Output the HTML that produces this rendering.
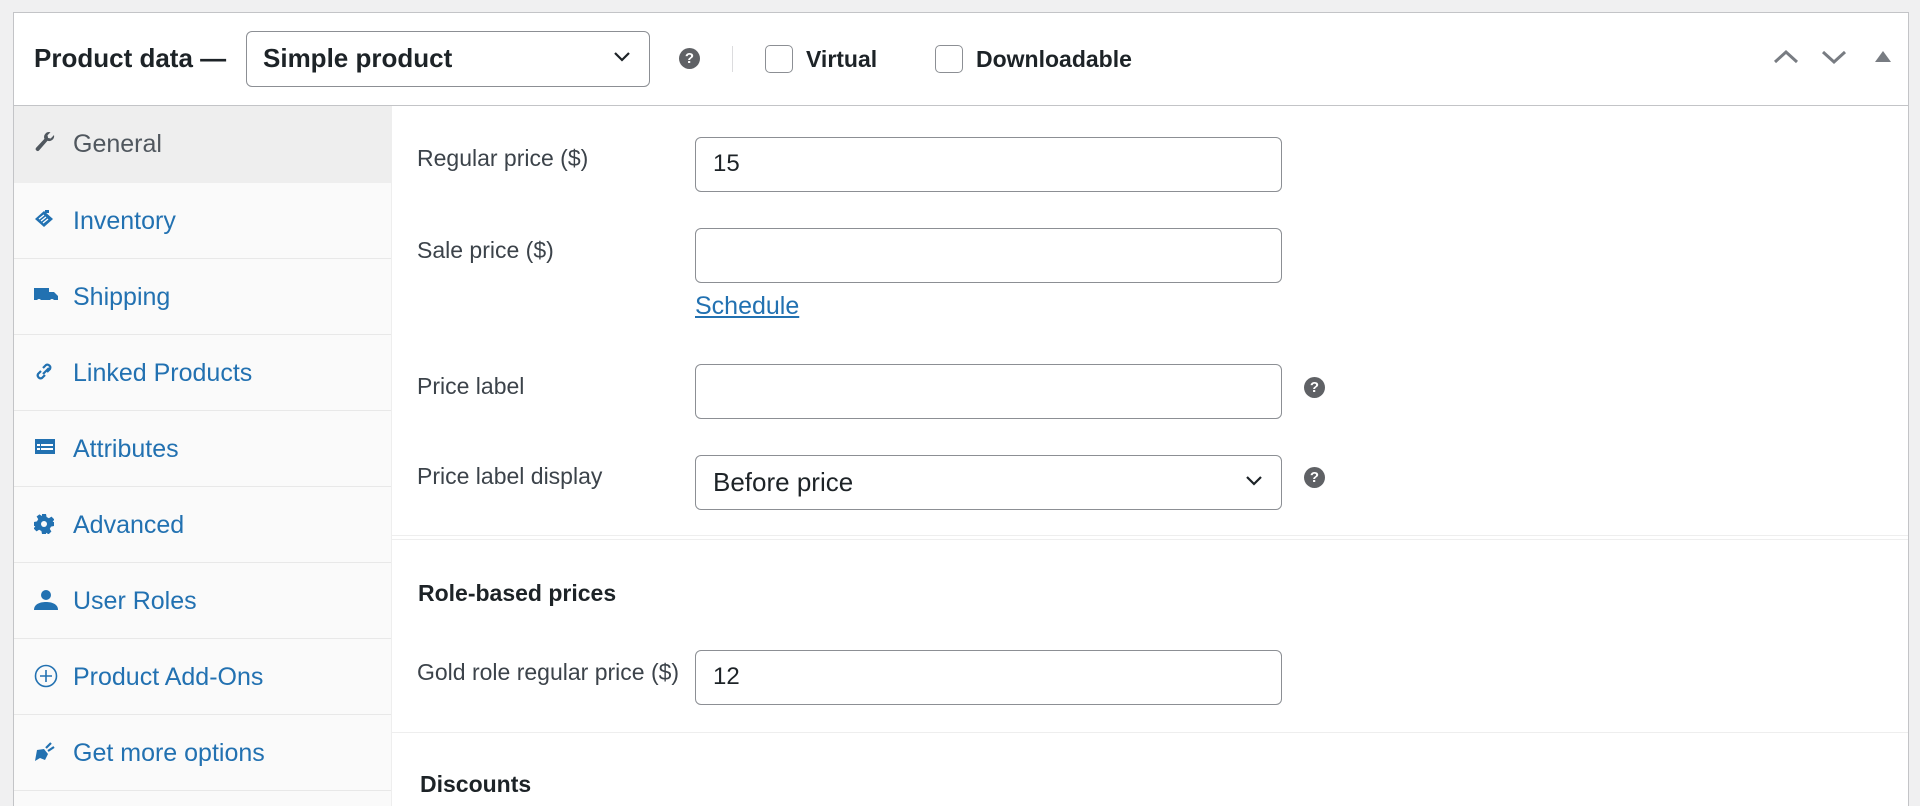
<!DOCTYPE html>
<html><head><meta charset="utf-8"><style>
*{box-sizing:border-box;margin:0;padding:0}
html,body{width:1920px;height:806px;overflow:hidden}
body{background:#f0f0f1;font-family:"Liberation Sans",Arial,sans-serif;position:relative}
.abs{position:absolute}
.panel{left:13px;top:12px;width:1896px;height:800px;background:#fff;border:1px solid #c3c4c7;border-bottom:none}
.hdr{left:14px;top:13px;width:1894px;height:93px;border-bottom:1px solid #c3c4c7;background:#fff}
.side{left:14px;top:106px;width:378px;height:700px;background:#fafafa;border-right:1px solid #eee}
.item{position:absolute;left:0;width:377px;height:76px;border-bottom:1px solid #e8e8e8;color:#2271b1;font-size:25px;line-height:76px;padding-left:59px}
.item svg{position:absolute;left:20px;top:27px}
.lbl{font-size:23px;color:#3c434a;line-height:28px}
.inp{left:695px;width:587px;height:55px;border:1.5px solid #8c8f94;border-radius:6px;background:#fff;font-size:24px;color:#1d2327;line-height:52px;padding-left:17px}
.q{width:21px;height:21px;border-radius:50%;background:#5f6165;color:#fff;font-size:15px;font-weight:bold;text-align:center;line-height:21px}
.cb{width:28px;height:28px;border:1.5px solid #8c8f94;border-radius:5px;background:#fff}
.chev{position:absolute;right:18px;top:19px}
</style></head><body>
<div class="abs panel"></div>
<div class="abs hdr"></div>
<div class="abs" style="left:34px;top:42px;font-size:26px;font-weight:bold;color:#1d2327;line-height:32px">Product data —</div>
<div class="abs inp" style="left:246px;top:31px;width:404px;height:56px;font-weight:600;font-size:26px;padding-left:16px">Simple product
<svg class="chev" width="18" height="12" viewBox="0 0 18 12"><path d="M2 2l7 7 7-7" stroke="#1d2327" stroke-width="2.2" fill="none"/></svg></div>
<div class="abs q" style="left:679px;top:48px">?</div>
<div class="abs" style="left:732px;top:46px;width:1px;height:26px;background:#dcdcde"></div>
<div class="abs cb" style="left:765px;top:45px"></div>
<div class="abs" style="left:806px;top:44px;font-size:23px;font-weight:bold;color:#1d2327;line-height:30px">Virtual</div>
<div class="abs cb" style="left:935px;top:45px"></div>
<div class="abs" style="left:976px;top:44px;font-size:23px;font-weight:bold;color:#1d2327;line-height:30px">Downloadable</div>
<svg class="abs" style="left:1773px;top:49px" width="26" height="16" viewBox="0 0 26 16"><path d="M2 13l11-10 11 10" stroke="#787c82" stroke-width="3" fill="none"/></svg>
<svg class="abs" style="left:1821px;top:49px" width="26" height="16" viewBox="0 0 26 16"><path d="M2 3l11 10 11-10" stroke="#787c82" stroke-width="3" fill="none"/></svg>
<svg class="abs" style="left:1875px;top:51px" width="16" height="11" viewBox="0 0 16 11"><path d="M8 0l8 11H0z" fill="#787c82"/></svg>

<div class="abs side">
<div class="item" style="top:0;height:77px;background:#eee;color:#50575e;border-bottom:none">
<svg width="22" height="22" viewBox="0 0 22 22" style="top:25px"><path d="M20 4a5 5 0 0 1-6.5 5.8L5 19.5a2 2 0 0 1-3-2.6l8.4-9A5 5 0 0 1 16.5 1.3L13.5 4.3l.6 2.7 2.6.5z" fill="#50575e"/></svg>General</div>
<div class="item" style="top:77px"><svg width="22" height="20" viewBox="0 0 22 20"><path d="M1 9l9-8 9 8-9 8z" fill="#2271b1"/><path d="M5 9l5-4M7 11l5-4M9 13l5-4" stroke="#fff" stroke-width="1.3"/><rect x="11" y="0" width="4" height="3" fill="#2271b1"/></svg>Inventory</div>
<div class="item" style="top:153px"><svg width="24" height="18" viewBox="0 0 24 18"><path d="M0 2h15v12H0zM15 6h5l4 4v4h-9z" fill="#2271b1"/><circle cx="5" cy="15" r="2" fill="#fafafa"/><circle cx="18" cy="15" r="2" fill="#fafafa"/></svg>Shipping</div>
<div class="item" style="top:229px"><svg width="22" height="20" viewBox="0 0 22 20"><path d="M9 12l6-6M7 9l-3 3a3 3 0 0 0 4 4l3-3M13 10l3-3a3 3 0 0 0-4-4l-3 3" stroke="#2271b1" stroke-width="2.2" fill="none"/></svg>Linked Products</div>
<div class="item" style="top:305px"><svg width="22" height="18" viewBox="0 0 22 18"><rect x="1" y="1" width="20" height="15" fill="#2271b1"/><rect x="3" y="6" width="3" height="2" fill="#fff"/><rect x="7" y="6" width="12" height="2" fill="#fff"/><rect x="3" y="10" width="3" height="2" fill="#fff"/><rect x="7" y="10" width="12" height="2" fill="#fff"/></svg>Attributes</div>
<div class="item" style="top:381px"><svg width="20" height="20" viewBox="0 0 20 20"><path d="M8 0h4l.6 3 2.3 1.2 2.6-1.6 2.8 2.8-1.6 2.6L20 8v4l-3 .6-1.2 2.3 1.6 2.6-2.8 2.8-2.6-1.6L12 20H8l-.6-3-2.3-1.2-2.6 1.6-2.8-2.8 1.6-2.6L0 12V8l3-.6 1.2-2.3-1.6-2.6L5.4.4 8 2z" fill="#2271b1"/><circle cx="10" cy="10" r="3" fill="#fafafa"/></svg>Advanced</div>
<div class="item" style="top:457px"><svg width="24" height="20" viewBox="0 0 24 20"><circle cx="12" cy="5" r="5" fill="#2271b1"/><path d="M0 20c0-6 6-8 12-8s12 2 12 8z" fill="#2271b1"/></svg>User Roles</div>
<div class="item" style="top:533px"><svg width="24" height="24" viewBox="0 0 24 24" style="top:25px"><circle cx="12" cy="12" r="10.5" stroke="#2271b1" stroke-width="1.6" fill="none"/><path d="M12 6v12M6 12h12" stroke="#2271b1" stroke-width="1.6"/></svg>Product Add-Ons</div>
<div class="item" style="top:609px"><svg width="22" height="20" viewBox="0 0 22 20"><path d="M3 8l7-1 4 5-3 6-5-2-5 3z" fill="#2271b1"/><path d="M12 6l5-5M14 9l6-4" stroke="#2271b1" stroke-width="2.2"/></svg>Get more options</div>
</div>

<div class="abs lbl" style="left:417px;top:144px">Regular price ($)</div>
<div class="abs inp" style="top:137px">15</div>
<div class="abs lbl" style="left:417px;top:236px">Sale price ($)</div>
<div class="abs inp" style="top:228px"></div>
<div class="abs" style="left:695px;top:291px;font-size:25px;color:#2271b1;text-decoration:underline;line-height:30px">Schedule</div>
<div class="abs lbl" style="left:417px;top:372px">Price label</div>
<div class="abs inp" style="top:364px"></div>
<div class="abs q" style="left:1304px;top:377px">?</div>
<div class="abs lbl" style="left:417px;top:462px">Price label display</div>
<div class="abs inp" style="top:455px;font-size:26px">Before price
<svg class="chev" width="18" height="12" viewBox="0 0 18 12"><path d="M2 2l7 7 7-7" stroke="#1d2327" stroke-width="2.2" fill="none"/></svg></div>
<div class="abs q" style="left:1304px;top:467px">?</div>
<div class="abs" style="left:392px;top:535px;width:1516px;height:5px;border-top:1px solid #eee;border-bottom:1px solid #eee"></div>
<div class="abs" style="left:418px;top:579px;font-size:23px;font-weight:bold;color:#1d2327;line-height:28px">Role-based prices</div>
<div class="abs lbl" style="left:417px;top:658px">Gold role regular price ($)</div>
<div class="abs inp" style="top:650px">12</div>
<div class="abs" style="left:392px;top:732px;width:1516px;height:1px;background:#eee"></div>
<div class="abs" style="left:420px;top:770px;font-size:23px;font-weight:bold;color:#1d2327;line-height:28px">Discounts</div>
</body></html>
